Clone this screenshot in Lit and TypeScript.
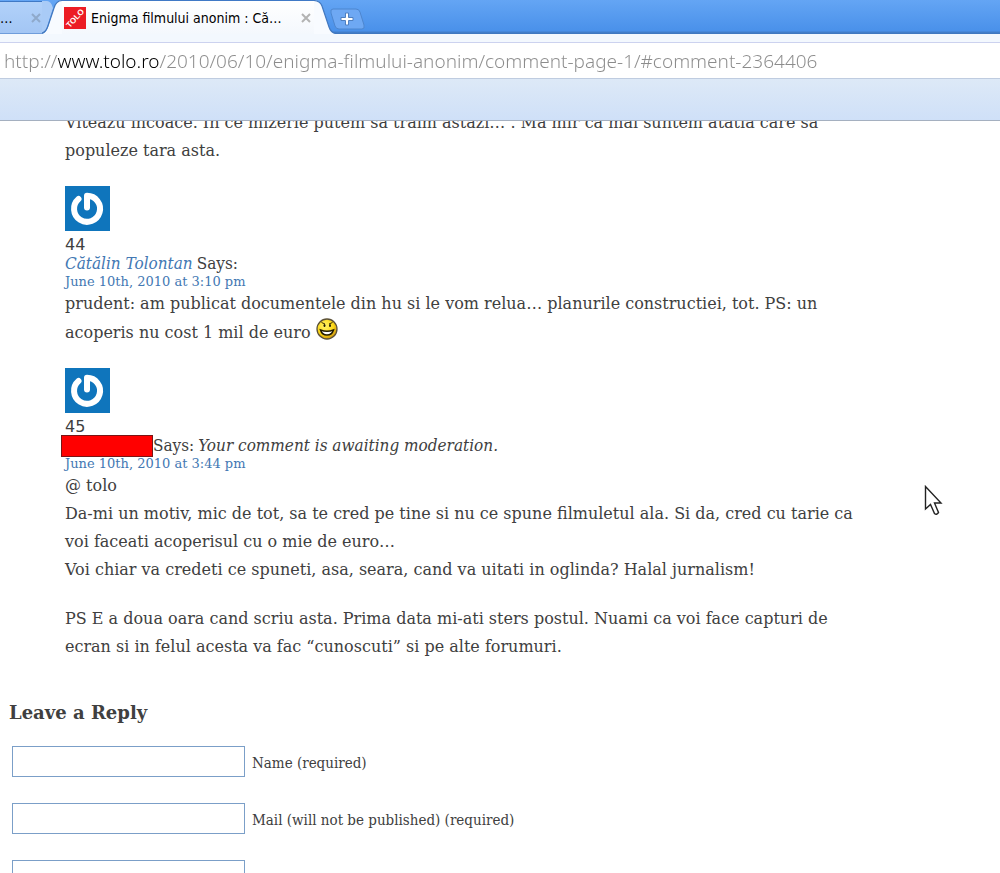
import { LitElement, html, css } from "lit";
import { customElement } from "lit/decorators.js";

const closeIcon = html`<svg width="10" height="10" viewBox="0 0 10 10" aria-hidden="true">
  <path d="M1 1L9 9M9 1L1 9" stroke="currentColor" stroke-width="2" fill="none" />
</svg>`;

const avatar = html`<svg class="avatar" width="45" height="45" viewBox="0 0 45 45" role="img" aria-label="Avatar">
  <rect width="45" height="45" fill="#0f75bc" />
  <path d="M13.500 13A13 13 0 1 0 22 9.800V21.500" fill="none" stroke="#fff" stroke-width="6" stroke-linecap="round" stroke-linejoin="round" />
</svg>`;

const smiley = html`<svg class="smiley" width="22" height="22" viewBox="0 0 22 22" role="img" aria-label="Big grin">
  <defs>
    <radialGradient id="face" cx=".4" cy=".35" r=".7">
      <stop offset="0" stop-color="#fff36a" />
      <stop offset=".6" stop-color="#fbd716" />
      <stop offset="1" stop-color="#c98e10" />
    </radialGradient>
  </defs>
  <circle cx="11" cy="11" r="10" fill="url(#face)" stroke="#5b5138" stroke-width="1.300" />
  <path d="M5.500 4.500L9 6M13 6L16.500 4.500" stroke="#3b2c00" stroke-width="1" />
  <ellipse cx="8.500" cy="7.500" rx="1" ry="1.600" fill="#221a00" />
  <ellipse cx="14" cy="7.500" rx="1" ry="1.600" fill="#221a00" />
  <path d="M4.500 12Q11 14.500 17.500 12Q16 17 11 17Q6 17 4.500 12Z" fill="#fff" stroke="#221a00" stroke-width="1.500" />
</svg>`;

@customElement("browser-chrome")
export class BrowserChrome extends LitElement {
  static styles = css`
    :host {
      display: block;
      font-family: "DejaVu Sans Condensed", Tahoma, "DejaVu Sans", sans-serif;
    }
    button {
      border: 0;
      padding: 0;
      background: none;
      display: flex;
      font: inherit;
    }
    svg {
      display: block;
      flex: none;
    }
    .strip {
      display: flex;
      height: 34px;
      background: linear-gradient(#64a5f4, #4a91ea 90%, #3f78c0 97%);
      color: #000;
      font-size: 14px;
    }
    .back {
      display: flex;
      align-items: center;
      gap: 18px;
      width: 42px;
      height: 33px;
      margin-top: 1px;
      box-sizing: border-box;
      border-top: 1px solid #3f79c6;
      border-bottom: 1px solid #6f9ddb;
      background: linear-gradient(#b1d1fa, #a3c6f4);
    }
    .active {
      display: flex;
      align-items: center;
      width: 252px;
      box-sizing: border-box;
      padding: 1px 0 0 2px;
      border-top: 1px solid #3f79c6;
      background: linear-gradient(#fff, #f4f8fd);
    }
    .title {
      flex: 1;
      margin-left: 5px;
      white-space: nowrap;
    }
    .close {
      color: #b3b3b3;
      margin-right: 3px;
    }
    .back .close {
      color: #8fa9cb;
    }
    .add {
      align-self: center;
      margin: 3px 0 0 -6px;
    }
    .toolbar {
      padding-top: 8px;
      background: #f3f8fe;
    }
    .field {
      background: #fff;
      border-top: 1px solid #ccd2ef;
      border-bottom: 1px solid #bfcce0;
    }
    .address {
      display: block;
      box-sizing: border-box;
      width: 100%;
      height: 35px;
      padding: 0 4px;
      border: 0;
      outline: 0;
      font-family: "Noto Sans", Tahoma, sans-serif;
      font-size: 19px;
      font-weight: 300;
      color: #8c8c8c;
      background: linear-gradient(90deg, #8c8c8c 57px, #000 57px, #000 160px, #8c8c8c 160px);
      -webkit-background-clip: text;
      background-clip: text;
      -webkit-text-fill-color: transparent;
    }
    .bookmarks {
      height: 41px;
      border-bottom: 1px solid #a5b0c0;
      background: linear-gradient(#dde9f7, #cfe0f8);
    }
  `;

  render() {
    return html`
      <div class="strip" role="tablist">
        <div class="back" role="tab" aria-selected="false">
          <span>…</span>
          <button class="close" aria-label="Close tab">${closeIcon}</button>
        </div>
        <svg width="20" height="34" viewBox="0 0 20 34" aria-hidden="true">
          <path d="M0 1H5Q9 1 11 8L4 30Q2 33 0 33Z" fill="#a9cbf7" />
          <path d="M0 34Q4 33 6 27L12 8Q14 1 20 0V34Z" fill="#f8fbff" />
          <path d="M0 33Q4 32 6 26L12 8Q14 1 20 0.500" fill="none" stroke="#4278bf" stroke-width="1.200" />
        </svg>
        <div class="active" role="tab" aria-selected="true">
          <svg width="22" height="22" viewBox="0 0 22 22" role="img" aria-label="Tolo">
            <rect width="22" height="22" fill="#ec1c24" />
            <text x="11" y="14" text-anchor="middle" transform="rotate(-48 11 11)" fill="#fff" font-family="Liberation Sans" font-size="8" font-weight="700">TOLO</text>
          </svg>
          <span class="title">Enigma filmului anonim : Că…</span>
          <button class="close" aria-label="Close tab">${closeIcon}</button>
        </div>
        <svg width="22" height="34" viewBox="0 0 22 34" aria-hidden="true">
          <path d="M0 0Q6 1 8 6L15 27Q17 33 22 34H0Z" fill="#f8fbff" />
          <path d="M0 0.500Q6 1 8 6L15 27Q17 33 22 33.500" fill="none" stroke="#4278bf" stroke-width="1.200" />
        </svg>
        <button class="add" aria-label="New tab">
          <svg width="36" height="22" viewBox="0 0 36 22">
            <path d="M3 1H26Q29 1 30 4L34 17Q35 21 32 21H9Q6 21 5 18L1 5Q0 1 3 1Z" fill="#6ea8f3" stroke="#4d86cf" />
            <path d="M15.500 5H18.500V9.500H23V12.500H18.500V17H15.500V12.500H11V9.500H15.500Z" fill="#fff" stroke="#4e7fc0" />
          </svg>
        </button>
      </div>
      <div class="toolbar">
        <div class="field">
          <input class="address" type="text" aria-label="Address" spellcheck="false"
            value="http://www.tolo.ro/2010/06/10/enigma-filmului-anonim/comment-page-1/#comment-2364406" />
        </div>
      </div>
      <div class="bookmarks"></div>
    `;
  }
}

@customElement("app-root")
export class AppRoot extends LitElement {
  static styles = css`
    :host {
      display: flex;
      flex-direction: column;
      height: 100vh;
      overflow: hidden;
      position: relative;
      background: #fff;
      color: #404040;
      font-family: "DejaVu Serif", serif;
      font-size: 16px;
      line-height: 28px;
    }
    .page {
      flex: 1;
      min-height: 0;
      overflow: hidden;
    }
    .comments {
      list-style: none;
      margin: -12px 0 0;
      padding: 0 65px 17px;
      max-width: 800px;
    }
    .comment {
      margin-bottom: 21px;
    }
    p {
      margin: 0 0 21px;
    }
    .avatar {
      display: block;
    }
    .number {
      margin-top: 5px;
      font-family: "DejaVu Sans", sans-serif;
      line-height: 17px;
    }
    .byline {
      display: flex;
      gap: 4px;
      height: 20px;
      font-family: "DejaVu Serif Condensed", "DejaVu Serif", serif;
      font-size: 17px;
      line-height: 20px;
      white-space: nowrap;
    }
    a {
      color: #4378b3;
      text-decoration: none;
    }
    .hidden-name {
      box-sizing: border-box;
      width: 92px;
      height: 22px;
      margin: 0 -4px;
      border: 1px solid #7a1515;
      background: #f00;
    }
    .date {
      display: block;
      width: max-content;
      font-size: 13px;
      line-height: 17px;
    }
    .smiley {
      vertical-align: -2px;
    }
    h3 {
      margin: 0 9px 19px;
      font-size: 18px;
      line-height: 28px;
    }
    .row {
      display: flex;
      align-items: center;
      gap: 7px;
      margin: 0 12px 26px;
      font-family: "DejaVu Serif Condensed", "DejaVu Serif", serif;
      font-size: 15px;
      line-height: 18px;
    }
    .row label {
      padding-top: 3px;
    }
    .row input {
      box-sizing: border-box;
      width: 233px;
      height: 31px;
      border: 1px solid #7b9fc8;
      border-radius: 0;
      background: #fff;
    }
    .pointer {
      position: absolute;
      left: 924px;
      top: 485px;
    }
  `;

  render() {
    return html`
      <browser-chrome></browser-chrome>
      <main class="page">
        <ol class="comments">
          <li class="comment">
            <p>
              Viteazu incoace. In ce mizerie putem sa traim astazi… . Ma mir ca mai suntem atatia care sa<br />
              populeze tara asta.
            </p>
          </li>
          <li class="comment">
            ${avatar}
            <div class="number">44</div>
            <div class="byline"><a href="#author"><em>Cătălin Tolontan</em></a> <span>Says:</span></div>
            <a class="date" href="#comment-44">June 10th, 2010 at 3:10 pm</a>
            <p>
              prudent: am publicat documentele din hu si le vom relua… planurile constructiei, tot. PS: un<br />
              acoperis nu cost 1 mil de euro ${smiley}
            </p>
          </li>
          <li class="comment">
            ${avatar}
            <div class="number">45</div>
            <div class="byline">
              <span class="hidden-name"></span> <span>Says:</span> <em>Your comment is awaiting moderation.</em>
            </div>
            <a class="date" href="#comment-45">June 10th, 2010 at 3:44 pm</a>
            <p>
              @ tolo<br />
              Da-mi un motiv, mic de tot, sa te cred pe tine si nu ce spune filmuletul ala. Si da, cred cu tarie ca<br />
              voi faceati acoperisul cu o mie de euro…<br />
              Voi chiar va credeti ce spuneti, asa, seara, cand va uitati in oglinda? Halal jurnalism!
            </p>
            <p>
              PS E a doua oara cand scriu asta. Prima data mi-ati sters postul. Nuami ca voi face capturi de<br />
              ecran si in felul acesta va fac “cunoscuti” si pe alte forumuri.
            </p>
          </li>
        </ol>
        <h3>Leave a Reply</h3>
        <form>
          <div class="row"><input id="name" type="text" /><label for="name">Name (required)</label></div>
          <div class="row">
            <input id="mail" type="email" /><label for="mail">Mail (will not be published) (required)</label>
          </div>
          <div class="row"><input type="url" aria-label="Website" /></div>
        </form>
      </main>
      <svg class="pointer" width="19" height="32" viewBox="0 0 19 32" aria-hidden="true">
        <path d="M1.500 1.500V24L6.500 19.500L10.500 28.500Q12.500 30.500 14.500 27.500L10.500 18H17Z" fill="#fff" stroke="#222" stroke-width="1.400" />
      </svg>
    `;
  }
}
